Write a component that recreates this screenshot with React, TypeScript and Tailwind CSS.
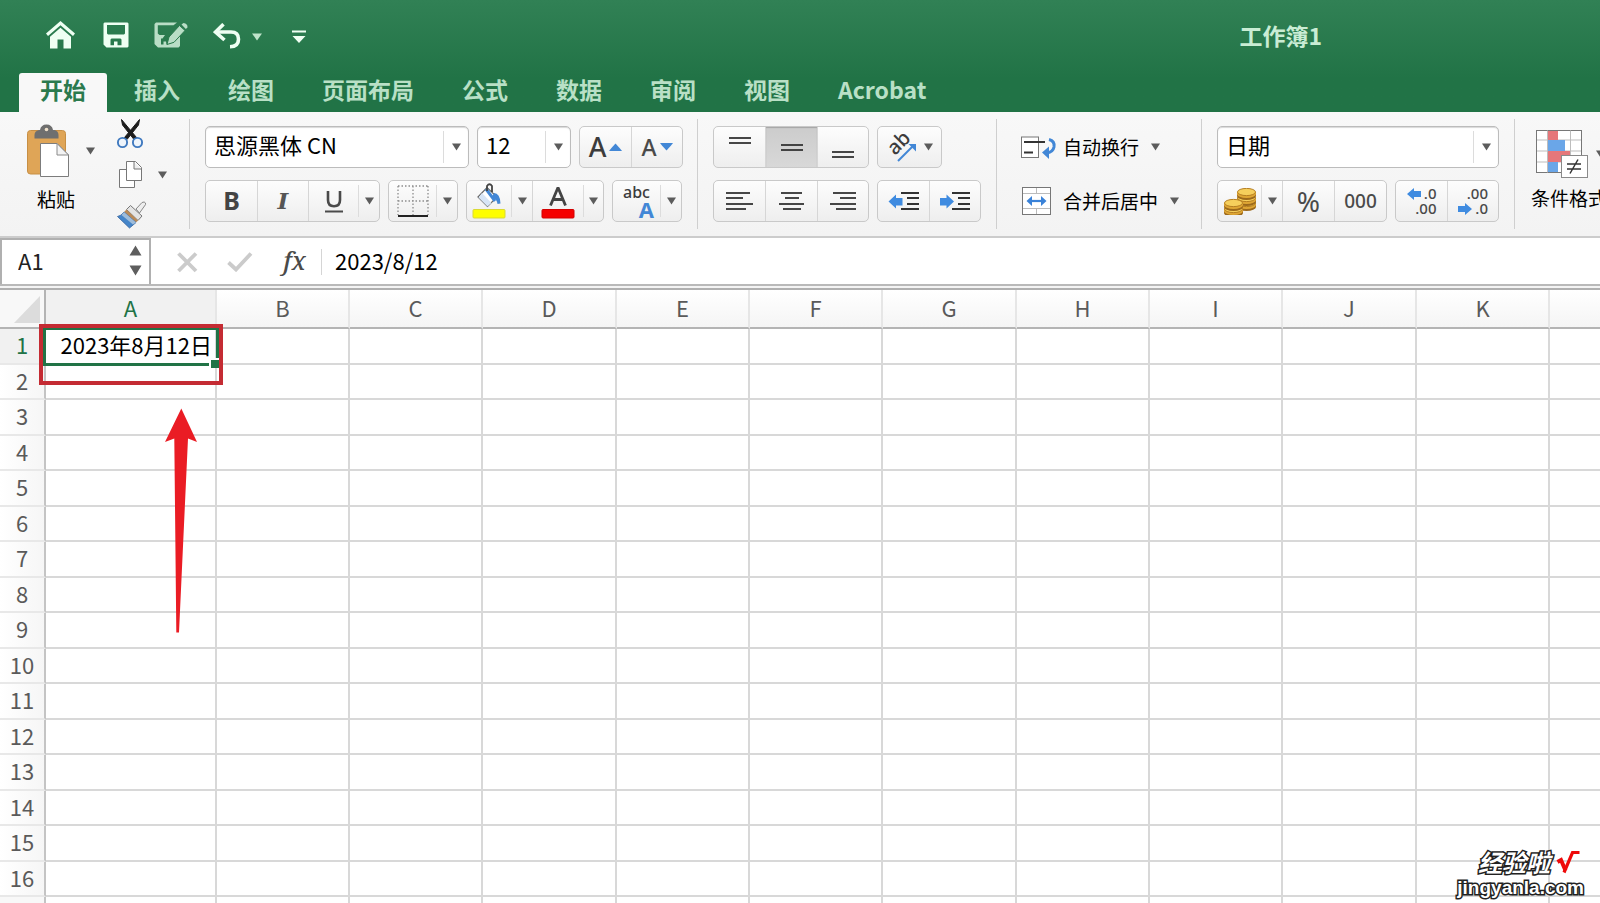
import type { ReactNode } from "react";

const TABS = ["开始", "插入", "绘图", "页面布局", "公式", "数据", "审阅", "视图", "Acrobat"];

const COLUMNS = [
  { name: "A", width: "w-[171px]" },
  { name: "B", width: "w-[133px]" },
  { name: "C", width: "w-[133px]" },
  { name: "D", width: "w-[134px]" },
  { name: "E", width: "w-[133px]" },
  { name: "F", width: "w-[133px]" },
  { name: "G", width: "w-[134px]" },
  { name: "H", width: "w-[133px]" },
  { name: "I", width: "w-[133px]" },
  { name: "J", width: "w-[134px]" },
  { name: "K", width: "w-[133px]" },
  { name: "", width: "w-auto" },
];

const ROWS = Array.from({ length: 16 }, (_, i) => i + 1);

function Caret({ className = "" }: { className?: string }) {
  return (
    <svg viewBox="0 0 9 8" className={`h-2 w-[9px] shrink-0 ${className}`} fill="#5c5c5c" aria-hidden="true">
      <path d="M0 0.5H9L4.5 7.5Z" />
    </svg>
  );
}

function Group({ children, className = "" }: { children: ReactNode; className?: string }) {
  return (
    <div className={`flex h-[42px] shrink-0 rounded-[5px] border border-[#c9c9c9] bg-linear-to-b from-[#fdfdfd] to-[#eeeeee] ${className}`}>
      {children}
    </div>
  );
}

function Tool({ label, children, className = "", last = false, active = false }: {
  label: string;
  children: ReactNode;
  className?: string;
  last?: boolean;
  active?: boolean;
}) {
  return (
    <button
      type="button"
      aria-label={label}
      className={`flex h-full shrink-0 items-center justify-center ${last ? "" : "border-r border-[#d6d6d6]"} ${active ? "bg-linear-to-b from-[#cccccc] to-[#d8d8d8] shadow-[inset_0_1px_1px_#a6a6a6]" : ""} ${className}`}
    >
      {children}
    </button>
  );
}

function Drop({ label, last = false }: { label: string; last?: boolean }) {
  return (
    <button type="button" aria-label={label} className={`flex h-full flex-1 items-center ${last ? "" : "border-r border-[#d6d6d6]"}`}>
      <span className="h-8 w-px bg-[#dcdcdc]" />
      <span className="flex flex-1 justify-center">
        <Caret />
      </span>
    </button>
  );
}

function Combo({ label, value, className }: { label: string; value: string; className: string }) {
  return (
    <div className={`relative h-[42px] shrink-0 rounded-[5px] border border-[#bcbcbc] bg-white shadow-[inset_0_1px_1px_#d9d9d9] ${className}`}>
      <select
        aria-label={label}
        defaultValue={value}
        className="h-full w-full appearance-none bg-transparent pb-[6px] pl-2 text-[22px] leading-8 text-black outline-none"
      >
        <option>{value}</option>
      </select>
      <span className="pointer-events-none absolute inset-y-0 right-0 flex w-[25px] items-center">
        <span className="h-8 w-px bg-[#dcdcdc]" />
        <span className="flex flex-1 justify-center">
          <Caret />
        </span>
      </span>
    </div>
  );
}

function Separator() {
  return <div className="mt-[7px] h-[110px] w-px shrink-0 bg-[#cfcfcf]" />;
}

function Lines({ rows, width }: { rows: [number, number, number][]; width: number }) {
  return (
    <svg width={width} height="24" viewBox={`0 0 ${width} 24`} stroke="#333" strokeWidth="1.8" aria-hidden="true">
      {rows.map(([x1, x2, y]) => (
        <path key={y} d={`M${x1} ${y}H${x2}`} />
      ))}
    </svg>
  );
}

function TitleBar() {
  return (
    <div className="flex h-[73px] items-center text-[#effff3]">
      <button type="button" aria-label="主页" className="ml-[46px] pb-1">
        <svg width="29" height="28" viewBox="0 0 29 28" fill="currentColor">
          <path d="M14.5 0L29 12.5L27 15L14.5 4.2L2 15L0 12.5Z" />
          <path d="M14.5 6.800L25 15.800V27.500H17.500V18.500H11.500V27.500H4V15.800Z" />
        </svg>
      </button>
      <button type="button" aria-label="保存" className="ml-7 pb-1">
        <svg width="26" height="26" viewBox="0 0 26 26" fill="currentColor">
          <path fillRule="evenodd" d="M1.500 0.500H24.500L25.500 1.500V24.500L24.500 25.500H3.500L0.500 22.500V1.500ZM4 3V11.500L5 12.500H21L22 11.500V3ZM7.500 17.500V23.200H11V19.500H14.500V23.200H18.500V17.500L17.500 16.500H8.500Z" />
        </svg>
      </button>
      <button type="button" aria-label="另存为" className="ml-[25px] pb-1 text-[#b9dec6]">
        <svg width="34" height="26" viewBox="0 0 34 26" fill="currentColor">
          <path fillRule="evenodd" d="M2 0.500H23L19.500 3.200H3.800V11.500L5.500 13H11L8.500 16.500H7V22.500H9.500V19.500H12L12.500 22.500L19 20.500L26 12.500V24L24.500 25.500H4L0.500 22V2Z" />
          <path d="M25.500 3.500L31 8.500L20 20.300L13 22.500L15 15Z" stroke="#2a7a4d" strokeWidth="1" />
          <path d="M27.500 2.500L29.500 1Q33.800 1.500 33.500 5.500L31.800 7Z" />
        </svg>
      </button>
      <button type="button" aria-label="撤消" className="ml-[25px] pb-[2px]">
        <svg width="29" height="26" viewBox="0 0 29 26" fill="none" stroke="currentColor" strokeWidth="3.600">
          <path d="M10.500 1.200L2.500 9L11.500 17" />
          <path d="M3 9H18Q25.500 9 25.500 16.200Q25.500 23.500 17 23.800" />
        </svg>
      </button>
      <button type="button" aria-label="撤消选项" className="ml-[10px]">
        <svg width="10" height="8" viewBox="0 0 10 8" fill="#bfe3ca">
          <path d="M0 0.500H10L5 7.500Z" />
        </svg>
      </button>
      <button type="button" aria-label="自定义快速访问工具栏" className="ml-[30px]">
        <svg width="14" height="14" viewBox="0 0 14 14" fill="currentColor">
          <path d="M0 0.500H14V2.500H0ZM0.500 6H13.500L7 13Z" />
        </svg>
      </button>
      <h1 className="mr-[278px] ml-auto pb-1 text-[23px] leading-8 font-bold text-[#c9ecd4]">工作簿1</h1>
    </div>
  );
}

function Tabs() {
  return (
    <nav className="flex h-[39px] items-stretch gap-[6px] pl-[19px]">
      {TABS.map((tab, i) => (
        <button
          key={tab}
          type="button"
          className={`shrink-0 px-[21px] pb-2 text-[23px] leading-8 font-bold ${i === 0 ? "rounded-t-[3px] bg-[#f8f8f8] text-[#2b7a4e]" : "text-[#b9e0c6]"}`}
        >
          {tab}
        </button>
      ))}
    </nav>
  );
}

function Clipboard() {
  return (
    <div className="flex w-[189px] shrink-0 pl-[26px]">
      <div className="flex w-[72px] flex-col pt-3">
        <button type="button" aria-label="粘贴板" className="flex items-center gap-4">
          <svg width="44" height="54" viewBox="0 0 44 54">
            <rect x="1.500" y="6.500" width="38" height="43.500" rx="3" fill="#dfa557" stroke="#c78f45" />
            <path d="M8.500 11Q8.500 7 13 6H14Q15 0.500 20.500 0.500Q26 0.500 27 6H28.500Q32.500 7 32.500 11V14.500H8.500Z" fill="#6f6f6f" />
            <circle cx="20.500" cy="5.500" r="1.800" fill="#f0e2cc" />
            <path d="M14.500 19.500H31L42.500 31V52.500H14.500Z" fill="#fff" stroke="#7c7c7c" />
            <path d="M31 19.500V31H42.500Z" fill="#f3f3f3" stroke="#8a8a8a" />
          </svg>
          <Caret />
        </button>
        <span className="mt-[7px] ml-[11px] text-[19px] leading-7 text-black">粘贴</span>
      </div>
      <div className="flex flex-col items-start pt-[7px] pl-[18px]">
        <button type="button" aria-label="剪切">
          <svg width="28" height="30" viewBox="0 0 28 30" fill="none">
            <path d="M5.500 0.500L6.500 6L18 20.500L20.500 18.500Z" fill="#1c1c1c" stroke="#1c1c1c" />
            <path d="M23.500 0.500L22.500 6L11 20.500L8.500 18.500Z" fill="#1c1c1c" stroke="#1c1c1c" />
            <circle cx="6.500" cy="23.500" r="4.600" stroke="#3f79bf" strokeWidth="1.900" fill="#eef4fb" />
            <circle cx="21.500" cy="23.500" r="4.600" stroke="#3f79bf" strokeWidth="1.900" fill="#eef4fb" />
          </svg>
        </button>
        <button type="button" aria-label="复制" className="mt-3 ml-[3px] flex items-center gap-[14px]">
          <svg width="25" height="28" viewBox="0 0 25 28" fill="#fff" stroke="#777">
            <path d="M0.500 8.500H15.500V26.500H0.500Z" />
            <path d="M7.500 0.500H16.500L22.500 6.500V19.500H7.500Z" />
            <path d="M15 1V8H22.500" fill="#eee" />
          </svg>
          <Caret />
        </button>
        <button type="button" aria-label="格式刷" className="mt-3">
          <svg width="31" height="28" viewBox="0 0 31 28">
            <path d="M20 8L26 1.500Q28.500 0.200 29.500 2Q30 3.800 28.500 5L23.500 12Z" fill="#eee" stroke="#888" />
            <path d="M14.500 4.500L26 15L22 19.500L10.500 8.500Z" fill="#e4e4e4" stroke="#777" />
            <path d="M10.500 8.500L22 19.500L20 21.500L8 11Z" fill="#b98a58" />
            <path d="M8 11L20 21.500L13.500 27L1.500 15.500Q5 15 8 11Z" fill="#4585c9" stroke="#2f5f9c" strokeWidth="0.800" />
            <path d="M8 11L20 21.500L17 23.500L5.500 14Z" fill="#9fbcd9" />
          </svg>
        </button>
      </div>
    </div>
  );
}

function FontTools() {
  return (
    <div className="flex w-[507px] shrink-0 flex-col gap-3 pt-[14px] pl-[15px]">
      <div className="flex gap-2">
        <Combo label="字体" value="思源黑体 CN" className="w-[264px]" />
        <Combo label="字号" value="12" className="w-[94px]" />
        <Group className="w-[104px] font-['Noto_Sans',sans-serif] font-medium">
          <Tool label="增大字号" className="w-[52px] gap-[3px] text-[27px] text-[#3c3c3c]">
            A
            <svg width="13" height="8" viewBox="0 0 13 8" fill="#4287d6"><path d="M0 8Q1 6.500 6.500 0.500Q12 6.500 13 8Z" /></svg>
          </Tool>
          <Tool label="减小字号" last className="flex-1 gap-[3px] text-[23px] text-[#4a4a4a]">
            A
            <svg width="13" height="8" viewBox="0 0 13 8" fill="#4287d6"><path d="M0 0Q1 1.500 6.500 7.500Q12 1.500 13 0Z" /></svg>
          </Tool>
        </Group>
      </div>
      <div className="flex gap-2">
        <Group className="w-[175px]">
          <Tool label="加粗" className="w-[52px]"><span className="font-['Noto_Sans',sans-serif] text-[25px] font-bold text-[#444]">B</span></Tool>
          <Tool label="倾斜" className="w-[51px]"><span className="font-['DejaVu_Serif',serif] text-[23px] font-bold text-[#555] italic">I</span></Tool>
          <Tool label="下划线" className="w-[49px] border-r-0">
            <svg width="18" height="24" viewBox="0 0 18 24" fill="none" stroke="#4a4a4a">
              <path d="M3 2V11Q3 17.200 9 17.200Q15 17.200 15 11V2" strokeWidth="2.600" />
              <path d="M0 22.500H18" strokeWidth="2" />
            </svg>
          </Tool>
          <Drop label="下划线样式" last />
        </Group>
        <Group className="w-[70px]">
          <Tool label="边框" className="w-[47px] border-r-0">
            <svg width="32" height="32" viewBox="0 0 32 32" fill="none" stroke="#8d8d8d">
              <path d="M1 1H31M1 16H31M1 1V30M16 1V30M31 1V30" strokeDasharray="1.500 2" strokeWidth="1.300" />
              <path d="M1 31H31" stroke="#222" strokeWidth="2" />
            </svg>
          </Tool>
          <Drop label="边框样式" last />
        </Group>
        <Group className="w-[138px]">
          <Tool label="填充颜色" className="w-[44px] border-r-0">
            <svg width="34" height="36" viewBox="0 0 34 36">
              <path d="M6 14L15 4.500L25 14L15.500 23.500Z" fill="#fff" stroke="#666" strokeWidth="1.200" />
              <path d="M10 10L19.500 20L15.500 23.500L6.500 14.500Z" fill="#d7e5f6" />
              <path d="M14 6L23 18" stroke="#4287d6" strokeWidth="3" />
              <path d="M22 10Q28 10 28.500 20.500L25.500 21Q25 16 20 14Z" fill="#4287d6" />
              <path d="M15 8V3Q17.500 -0.500 20 3V9" fill="none" stroke="#444" strokeWidth="1.800" />
              <rect x="1" y="26.500" width="32" height="8.500" rx="1" fill="#fefe00" stroke="#d9d936" />
            </svg>
          </Tool>
          <span className="flex w-[22px]"><Drop label="填充颜色选项" /></span>
          <Tool label="字体颜色" className="w-[50px] border-r-0">
            <svg width="34" height="36" viewBox="0 0 34 36">
              <path d="M9.500 22.500L17 4.500L24.500 22.500M12 16.500H22" fill="none" stroke="#444" strokeWidth="2.800" strokeLinejoin="bevel" />
              <rect x="1" y="26.500" width="32" height="8.500" rx="1" fill="#f50000" stroke="#d20000" />
            </svg>
          </Tool>
          <Drop label="字体颜色选项" last />
        </Group>
        <Group className="w-[70px]">
          <Tool label="拼音指南" className="w-[47px] border-r-0">
            <span className="flex flex-col font-['Noto_Sans',sans-serif]">
              <span className="text-[16px] leading-4 font-medium text-[#3c3c3c]">abc</span>
              <span className="-mr-1 self-end text-[22px] leading-[18px] font-bold text-[#4287d6]">A</span>
            </span>
          </Tool>
          <Drop label="拼音选项" last />
        </Group>
      </div>
    </div>
  );
}

function Alignment() {
  return (
    <div className="flex w-[298px] shrink-0 flex-col gap-3 pt-[14px] pl-[15px]">
      <div className="flex gap-2">
        <Group className="w-[156px]">
          <Tool label="顶端对齐" className="w-[52px]"><Lines width={22} rows={[[0, 22, 3], [0, 22, 8]]} /></Tool>
          <Tool label="垂直居中" active className="w-[52px]"><Lines width={22} rows={[[0, 22, 10], [0, 22, 15]]} /></Tool>
          <Tool label="底端对齐" last className="flex-1"><Lines width={22} rows={[[0, 22, 17], [0, 22, 22]]} /></Tool>
        </Group>
        <Group className="w-[65px]">
          <Tool label="方向" last className="flex-1 gap-[6px]">
            <svg width="32" height="32" viewBox="0 0 32 32" className="overflow-visible">
              <text x="0" y="0" transform="translate(9 25) rotate(-45)" fontFamily="Noto Sans" fontSize="20" fontWeight="500" fill="#3c3c3c">ab</text>
              <path d="M12 30L28 14" stroke="#4287d6" strokeWidth="2" />
              <path d="M22.500 13H30V20.500Z" fill="#4287d6" />
            </svg>
            <Caret />
          </Tool>
        </Group>
      </div>
      <div className="flex gap-2">
        <Group className="w-[156px]">
          <Tool label="左对齐" className="w-[52px]"><Lines width={28} rows={[[0, 24, 4], [0, 17, 9], [0, 27, 15], [0, 20, 20]]} /></Tool>
          <Tool label="居中" className="w-[52px]"><Lines width={28} rows={[[3, 24, 4], [7, 21, 9], [1, 26, 15], [5, 23, 20]]} /></Tool>
          <Tool label="右对齐" last className="flex-1"><Lines width={28} rows={[[4, 27, 4], [11, 27, 9], [1, 27, 15], [7, 27, 20]]} /></Tool>
        </Group>
        <Group className="w-[104px]">
          <Tool label="减少缩进量" className="w-[52px]">
            <svg width="32" height="24" viewBox="0 0 32 24">
              <path d="M13 4H31M19 9H31M19 15H31M13 20H31" stroke="#333" strokeWidth="1.800" />
              <path d="M0.500 12.500L8 5.500V9H14.500V16.500H8V19.500Z" fill="#3f8be0" />
            </svg>
          </Tool>
          <Tool label="增加缩进量" last className="flex-1">
            <svg width="32" height="24" viewBox="0 0 32 24">
              <path d="M13 4H31M19 9H31M19 15H31M13 20H31" stroke="#333" strokeWidth="1.800" />
              <path d="M15 12.500L7.500 5.500V9H1V16.500H7.500V19.500Z" fill="#3f8be0" />
            </svg>
          </Tool>
        </Group>
      </div>
    </div>
  );
}

function WrapMerge() {
  return (
    <div className="flex w-[204px] shrink-0 flex-col gap-3 pt-[14px] pl-6">
      <button type="button" className="flex h-[42px] items-center text-[19px] leading-7 text-black">
        <svg width="36" height="24" viewBox="0 0 36 24">
          <rect x="0.500" y="2" width="17" height="20.500" fill="#fff" stroke="#777" />
          <path d="M3 7H24M3 17.500H12" stroke="#333" strokeWidth="1.800" />
          <path d="M28 4.500Q34 6 33 12Q32 17 26 18" fill="none" stroke="#4287d6" strokeWidth="3" />
          <path d="M21 17.500L28 11.500V24Z" fill="#4287d6" />
        </svg>
        <span className="ml-[6px]">自动换行</span>
        <Caret className="ml-[12px]" />
      </button>
      <button type="button" className="flex h-[42px] items-center text-[19px] leading-7 text-black">
        <svg width="36" height="28" viewBox="0 0 36 28">
          <rect x="1.500" y="0.500" width="28" height="27" fill="#fff" stroke="#777" />
          <path d="M2 6.500H29M2 21.500H29M15.500 1V6M15.500 22V27" stroke="#bbb" />
          <path d="M8 14H23" stroke="#3a82d8" strokeWidth="2.200" />
          <path d="M5.500 14L11 9V19ZM25.500 14L20 9V19Z" fill="#3a82d8" />
        </svg>
        <span className="ml-[6px]">合并后居中</span>
        <Caret className="ml-[12px]" />
      </button>
    </div>
  );
}

function Coin({ x, y }: { x: number; y: number }) {
  return (
    <g>
      <path d={`M${x} ${y}V${y + 4}A9.500 4 0 0 0 ${x + 19} ${y + 4}V${y}Z`} fill="#9c691b" />
      <path d={`M${x} ${y}V${y + 2}A9.500 4 0 0 0 ${x + 19} ${y + 2}V${y}Z`} fill="#dfa634" />
      <ellipse cx={x + 9.5} cy={y} rx="9" ry="3.600" fill="#f6cf5c" stroke="#b67f22" />
    </g>
  );
}

function NumberTools() {
  return (
    <div className="flex w-[312px] shrink-0 flex-col gap-3 pt-[14px] pl-[15px]">
      <Combo label="数字格式" value="日期" className="w-[282px]" />
      <div className="flex gap-2 font-['Noto_Sans',sans-serif] font-medium text-[#4a4a4a]">
        <Group className="w-[170px]">
          <Tool label="会计数字格式" className="w-[43px] border-r-0">
            <svg width="34" height="27" viewBox="0 0 34 27">
              <Coin x={14} y={15} />
              <Coin x={14} y={10} />
              <Coin x={14} y={4} />
              <Coin x={1} y={21} />
              <Coin x={1} y={15} />
            </svg>
          </Tool>
          <span className="flex w-[22px]"><Drop label="会计格式选项" /></span>
          <Tool label="百分比样式" className="w-[52px] text-[28px] font-normal">%</Tool>
          <Tool label="千位分隔样式" last className="flex-1 text-[19px]">000</Tool>
        </Group>
        <Group className="w-[104px]">
          <Tool label="增加小数位数" className="w-[52px]">
            <span className="flex w-[30px] flex-col text-right text-[15px] leading-[15px]">
              <span className="flex items-center justify-between">
                <svg width="14" height="12" viewBox="0 0 14 12" fill="#3f8be0"><path d="M0 6L7 0V3H14V9H7V12Z" /></svg>
                .0
              </span>
              <span>.00</span>
            </span>
          </Tool>
          <Tool label="减少小数位数" last className="flex-1">
            <span className="flex w-[30px] flex-col text-right text-[15px] leading-[15px]">
              <span>.00</span>
              <span className="flex items-center justify-between">
                <svg width="14" height="12" viewBox="0 0 14 12" fill="#3f8be0"><path d="M14 6L7 0V3H0V9H7V12Z" /></svg>
                .0
              </span>
            </span>
          </Tool>
        </Group>
      </div>
    </div>
  );
}

function ConditionalFormat() {
  return (
    <button type="button" className="flex shrink-0 flex-col items-start pt-[17px] pl-4 text-[19px] leading-7 text-black">
      <span className="flex items-center gap-2 pl-[5px]">
        <svg width="52" height="50" viewBox="0 0 52 50">
          <rect x="0.500" y="1.500" width="45" height="42" fill="#fff" stroke="#777" />
          <path d="M11.500 1.500V43.500M34.500 1.500V43.500M1 11H45M1 22H45M1 33H45" stroke="#bdbdbd" />
          <path d="M12 2H22V11H12Z" fill="#e5777a" />
          <path d="M12 11H29V22H12Z" fill="#6aa6e8" />
          <path d="M12 22H34V33H12Z" fill="#e5777a" />
          <path d="M12 33H22V43H12Z" fill="#6aa6e8" />
          <rect x="25.500" y="26.500" width="26" height="22" fill="#fff" stroke="#8a8a8a" />
          <path d="M31 35H45M31 40H45M42 30.500L34 44.500" stroke="#333" strokeWidth="1.500" />
        </svg>
        <Caret />
      </span>
      <span className="mt-[5px] whitespace-nowrap">条件格式</span>
    </button>
  );
}

function FormulaBar() {
  return (
    <div className="flex h-[48px] shrink-0 items-stretch border-b-2 border-[#b9b9b9] bg-white text-[22px] leading-8">
      <div className="flex w-[151px] shrink-0 items-center justify-between border-2 border-b-0 border-[#b0b0b0] pr-[7px] pb-1 pl-4">
        <input aria-label="名称框" defaultValue="A1" className="w-20 bg-transparent text-[#222] outline-none" />
        <svg width="13" height="31" viewBox="0 0 13 31" fill="#5e5e5e" aria-hidden="true">
          <path d="M0.500 10.500L6.500 0.500L12.500 10.500ZM0.500 20.500H12.500L6.500 30.500Z" />
        </svg>
      </div>
      <div className="flex items-center pt-[2px]">
        <button type="button" aria-label="取消" className="ml-[26px]">
          <svg width="21" height="21" viewBox="0 0 21 21" stroke="#cbcbcb" strokeWidth="3.800"><path d="M1.500 1.500L19 19M19 1.500L1.500 19" /></svg>
        </button>
        <button type="button" aria-label="输入" className="ml-[29px]">
          <svg width="26" height="20" viewBox="0 0 26 20" fill="none" stroke="#cbcbcb" strokeWidth="3.800"><path d="M1.500 10.500L9 17.500L24 1.500" /></svg>
        </button>
        <button type="button" aria-label="插入函数" className="ml-7 w-[27px] pb-1 font-['Noto_Serif','DejaVu_Serif',serif] text-[25px] font-medium text-[#4a4a4a] italic">fx</button>
        <span className="ml-[13px] h-[26px] w-px bg-[#d5d5d5]" />
      </div>
      <input aria-label="编辑栏" defaultValue="2023/8/12" className="flex-1 bg-transparent pb-[2px] pl-[13px] text-black outline-none" />
    </div>
  );
}

function Sheet() {
  return (
    <main className="relative flex-1 overflow-hidden bg-white">
      <table className="w-full table-fixed border-separate border-spacing-0 text-[22px] leading-7">
        <colgroup>
          <col className="w-[46px]" />
          {COLUMNS.map((c) => <col key={c.name} className={c.width} />)}
        </colgroup>
        <thead>
          <tr className="h-[39px]">
            <th className="border-r-2 border-b-2 border-[#b4b4b4] bg-[#f8f8f8] p-0 align-bottom">
              <svg width="26" height="27" viewBox="0 0 26 27" className="mr-1 mb-1 ml-auto" fill="#dcdcdc" aria-hidden="true"><path d="M26 0V27H0Z" /></svg>
            </th>
            {COLUMNS.map((c, i) => (
              <th
                key={c.name}
                className={`border-r-2 border-b-2 border-r-[#e6e6e6] border-b-[#b4b4b4] p-0 font-normal last:border-r-0 ${i === 0 ? "bg-[#f1f1f1] text-[#217346]" : "bg-linear-to-b from-white to-[#f5f5f5] text-[#5a5a5a]"}`}
              >
                <div className="h-8">{c.name}</div>
              </th>
            ))}
          </tr>
        </thead>
        <tbody>
          {ROWS.map((row) => (
            <tr key={row} className="odd:h-[36px] even:h-[35px]">
              <th className={`border-r-2 border-b-2 border-r-[#c4c4c4] border-b-[#e8e8e8] p-0 font-normal ${row === 1 ? "bg-[#f1f1f1] text-[#217346]" : "bg-linear-to-r from-white to-[#f6f6f6] text-[#5a5a5a]"}`}>
                <div className="h-8">{row}</div>
              </th>
              {COLUMNS.map((c, i) => (
                <td key={c.name} className="border-r-2 border-b-2 border-[#d8d8d8] p-0 pr-[3px] text-right whitespace-nowrap text-black last:border-r-0">
                  {row === 1 && i === 0 ? <div className="h-8">2023年8月12日</div> : null}
                </td>
              ))}
            </tr>
          ))}
          <tr className="h-9">
            <th className="border-r-2 border-[#c4c4c4] bg-[#f8f8f8] p-0" />
            {COLUMNS.map((c) => <td key={c.name} className="border-r-2 border-[#d8d8d8] p-0 last:border-r-0" />)}
          </tr>
        </tbody>
      </table>
      <div className="absolute top-[37px] left-[43px] h-[39px] w-[176px] border-3 border-[#217346]">
        <span className="absolute -right-[3px] -bottom-[5px] size-[10px] border-t-2 border-l-2 border-white bg-[#217346]" />
      </div>
      <div className="absolute top-[34px] left-[39px] h-[61px] w-[184px] border-4 border-[#c42b33]" />
      <svg className="absolute top-[118px] left-[165px]" width="32" height="225" viewBox="0 0 32 225" aria-hidden="true">
        <path d="M16.300 0.500L32 34L23 30.500L14 224.500H11.300L9.300 30.500L0 34Z" fill="#ea1c24" />
      </svg>
    </main>
  );
}

function Watermark() {
  return (
    <div className="absolute right-4 bottom-[5px] flex flex-col items-end font-['Liberation_Sans','Noto_Sans_CJK_SC',sans-serif] font-bold text-white [-webkit-text-stroke:3px_#222] [paint-order:stroke_fill]">
      <span className="flex items-start gap-[6px] pr-1 text-[24px] leading-7">
        <span className="italic">经验啦</span>
        <svg width="24" height="24" viewBox="0 0 24 24" fill="none" stroke="#ee0a0a" aria-label="√">
          <path d="M1.500 12L5 10L9.500 20.500" strokeWidth="4" />
          <path d="M8 22.500L16.500 2.500H23.500" strokeWidth="3.200" />
        </svg>
      </span>
      <span className="text-[19px] leading-5">jingyanla.com</span>
    </div>
  );
}

export default function App() {
  return (
    <div className="relative flex h-screen flex-col overflow-hidden bg-[#f5f5f5] font-['Noto_Sans_CJK_SC',sans-serif]">
      <header className="shrink-0 bg-linear-to-b from-[#318155] to-[#217346] to-70%">
        <TitleBar />
        <Tabs />
      </header>
      <section aria-label="功能区" className="flex h-[126px] shrink-0 overflow-hidden border-b-2 border-[#cccccc] bg-linear-to-b from-[#f8f8f8] to-[#f3f3f3]">
        <Clipboard />
        <Separator />
        <FontTools />
        <Separator />
        <Alignment />
        <Separator />
        <WrapMerge />
        <Separator />
        <NumberTools />
        <Separator />
        <ConditionalFormat />
      </section>
      <FormulaBar />
      <div className="h-1 shrink-0 border-b-2 border-[#b0b0b0] bg-[#f4f4f4]" />
      <Sheet />
      <Watermark />
    </div>
  );
}
